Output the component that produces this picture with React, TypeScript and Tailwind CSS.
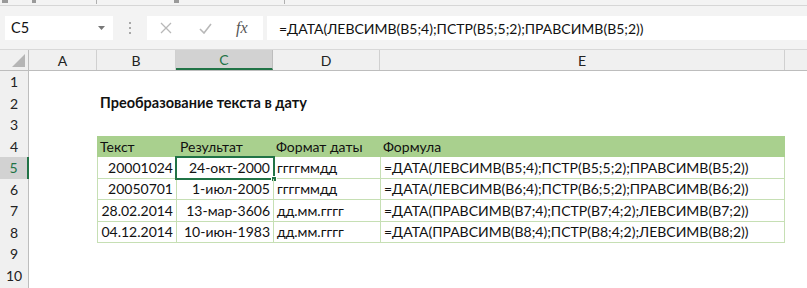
import React from "react";

const F = { fontFamily: "Lato, 'Open Sans', 'Liberation Sans', sans-serif" };

const cols = [
  { k: "A", w: 68 },
  { k: "B", w: 79 },
  { k: "C", w: 97 },
  { k: "D", w: 107 },
  { k: "E", w: 405 },
  { k: "F", w: 40 },
];

const data = [
  ["20001024", "24-окт-2000", "ггггммдд", "=ДАТА(ЛЕВСИМВ(B5;4);ПСТР(B5;5;2);ПРАВСИМВ(B5;2))"],
  ["20050701", "1-июл-2005", "ггггммдд", "=ДАТА(ЛЕВСИМВ(B6;4);ПСТР(B6;5;2);ПРАВСИМВ(B6;2))"],
  ["28.02.2014", "13-мар-3606", "дд.мм.гггг", "=ДАТА(ПРАВСИМВ(B7;4);ПСТР(B7;4;2);ЛЕВСИМВ(B7;2))"],
  ["04.12.2014", "10-июн-1983", "дд.мм.гггг", "=ДАТА(ПРАВСИМВ(B8;4);ПСТР(B8;4;2);ЛЕВСИМВ(B8;2))"],
];

function RowHeader({ n, sel }: { n?: number; sel?: boolean }) {
  return (
    <div
      className={
        "w-[29px] shrink-0 flex items-center justify-center text-[14px] border-r " +
        (sel
          ? "bg-[#d2d2d2] border-r-2 border-r-[#217346] text-[#217346]"
          : "bg-[#f0f0f0] border-r-[#bdbdbd] text-[#222]")
      }
    >
      {n}
    </div>
  );
}

export default function App() {
  const rowH = "h-[21.5px]";
  return (
    <div className="w-[807px] h-[288px] overflow-hidden bg-white text-[#111]" style={F}>
      {/* ribbon remnant */}
      <div className="relative h-[6px] bg-[#f3f3f3] border-b border-[#d6d6d6] overflow-hidden">
        <div className="absolute top-0 left-[2px] w-[6px] h-[3px] bg-[#9a9a9a]" />
        <div className="absolute top-0 left-[32px] w-[4px] h-[3px] bg-[#9a9a9a]" />
        <div className="absolute top-0 left-[96px] w-[1px] h-[4px] bg-[#b0b0b0]" />
        <div className="absolute top-0 left-[174px] w-[5px] h-[3px] bg-[#9a9a9a]" />
        <div className="absolute top-0 left-[284px] w-[1px] h-[4px] bg-[#b0b0b0]" />
      </div>
      {/* formula bar */}
      <div className="h-[44px] bg-[#f3f3f3] flex items-start pt-[10px] border-b border-[#d8d8d8]">
        <div className="ml-[5px] w-[108px] h-[24px] bg-white flex items-center justify-between pl-[6px] pr-[8px] text-[14.5px]">
          <span>C5</span>
          <svg width="7" height="4" viewBox="0 0 7 4"><path d="M0 0 L7 0 L3.5 4 Z" fill="#777" /></svg>
        </div>
        <div className="w-[34px] h-[24px] flex flex-col items-center justify-center gap-[3px]">
          <div className="w-[2px] h-[2px] bg-[#a8a8a8]" />
          <div className="w-[2px] h-[2px] bg-[#a8a8a8]" />
          <div className="w-[2px] h-[2px] bg-[#a8a8a8]" />
        </div>
        <div className="w-[116px] h-[24px] bg-white flex items-center">
          <svg className="ml-[13px]" width="12" height="12" viewBox="0 0 12 12"><path d="M1 1 L11 11 M11 1 L1 11" stroke="#b8b8b8" strokeWidth="1.3" /></svg>
          <svg className="ml-[27px]" width="13" height="11" viewBox="0 0 13 11"><path d="M1 6 L5 10 L12 1" stroke="#b8b8b8" strokeWidth="1.6" fill="none" /></svg>
          <span className="ml-[24px] text-[16px] italic text-[#555]" style={{ fontFamily: "'Liberation Serif', serif" }}>
            fx
          </span>
        </div>
        <div className="ml-[4px] flex-1 h-[24px] bg-white flex items-center pl-[12px] text-[14px]">
          =ДАТА(ЛЕВСИМВ(B5;4);ПСТР(B5;5;2);ПРАВСИМВ(B5;2))
        </div>
      </div>
      {/* column headers */}
      <div className="flex h-[21px] bg-[#f0f0f0] border-b border-[#bdbdbd]">
        <div className="w-[29px] shrink-0 border-r border-[#bdbdbd] relative">
          <svg className="absolute right-[3px] bottom-[3px]" width="13" height="13" viewBox="0 0 13 13"><path d="M13 0 L13 13 L0 13 Z" fill="#b5b5b5" /></svg>
        </div>
        {cols.map((c) => (
          <div
            key={c.k}
            style={{ width: c.w }}
            className={
              "shrink-0 flex items-center justify-center text-[14px] " +
              (c.k === "C"
                ? "bg-[#d2d2d2] border-b-2 border-[#217346] text-[#217346] border-r border-r-[#bdbdbd]"
                : "border-r border-[#d0d0d0] text-[#222]")
            }
          >
            {c.k === "F" ? "" : c.k}
          </div>
        ))}
      </div>
      {/* rows */}
      <div className="flex flex-col">
        {[1, 2, 3].map((n) => (
          <div key={n} className={"flex " + rowH}>
            <RowHeader n={n} />
            <div className="w-[68px] shrink-0" />
            {n === 2 && (
              <div className="pl-[3px] flex items-center text-[14.5px] font-bold whitespace-nowrap">
                Преобразование текста в дату
              </div>
            )}
          </div>
        ))}
        {/* header row 4 */}
        <div className={"flex " + rowH}>
          <RowHeader n={4} />
          <div className="w-[68px] shrink-0" />
          <div className="flex bg-[#a9d08e] text-[14px]">
            <div className="w-[79px] pl-[3px] flex items-center">Текст</div>
            <div className="w-[97px] pl-[4px] flex items-center">Результат</div>
            <div className="w-[107px] pl-[3px] flex items-center">Формат даты</div>
            <div className="w-[405px] pl-[3px] flex items-center">Формула</div>
          </div>
        </div>
        {data.map((r, i) => (
          <div key={i} className={"flex " + rowH}>
            <RowHeader n={5 + i} sel={i === 0} />
            <div className="w-[68px] shrink-0" />
            <div className="flex text-[14px] border-l border-b border-[#c6dfb4]">
              <div className="w-[79px] pr-[3px] flex items-center justify-end border-r border-[#c6dfb4]">{r[0]}</div>
              <div className="relative w-[97px] pr-[3px] flex items-center justify-end border-r border-[#c6dfb4]">
                {r[1]}
                {i === 0 && (
                  <div className="absolute left-[-2px] top-[-1px] right-[-2px] bottom-[-2px] border-2 border-[#217346]">
                    <div className="absolute right-[-4px] bottom-[-4px] w-[6px] h-[6px] bg-[#217346] border border-white" />
                  </div>
                )}
              </div>
              <div className="w-[107px] pl-[3px] flex items-center border-r border-[#c6dfb4]">{r[2]}</div>
              <div className="w-[404px] pl-[3px] flex items-center border-r border-[#c6dfb4] whitespace-nowrap">{r[3]}</div>
            </div>
          </div>
        ))}
        {[9, 10].map((n) => (
          <div key={n} className={"flex " + rowH}>
            <RowHeader n={n} />
          </div>
        ))}
        <div className={"flex " + rowH}>
          <RowHeader />
        </div>
      </div>
    </div>
  );
}
